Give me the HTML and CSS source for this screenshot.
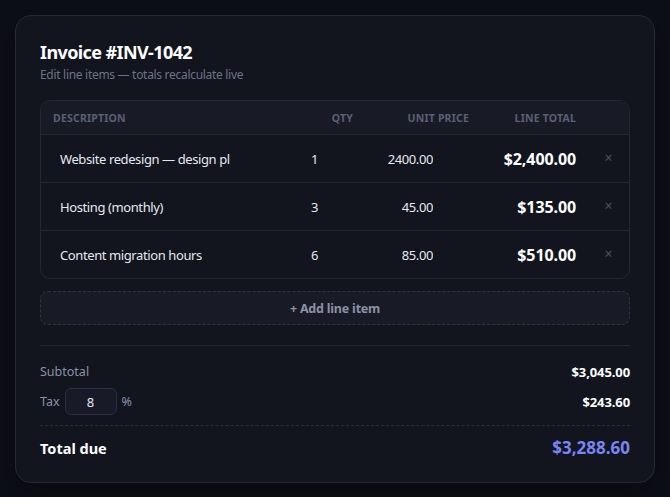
FILE: index.html
```html
<!DOCTYPE html>
<html lang="en">
<head>
<meta charset="utf-8">
<title>Invoice #INV-1042</title>
<link rel="stylesheet" href="styles.css">
</head>
<body>
<main class="card">
  <header class="head">
    <h1 class="title">Invoice #INV-1042</h1>
    <p class="subtitle">Edit line items — totals recalculate live</p>
  </header>

  <section class="table">
    <div class="row row-head">
      <div class="th th-desc">Description</div>
      <div class="th th-num">Qty</div>
      <div class="th th-num">Unit price</div>
      <div class="th th-num">Line total</div>
      <div class="th"></div>
    </div>
    <div class="row">
      <div class="td td-desc"><input class="in in-desc" value="Website redesign — design pl"></div>
      <div class="td td-qty"><input class="in in-qty" value="1"></div>
      <div class="td td-price"><input class="in in-price" value="2400.00"></div>
      <div class="td td-total">$2,400.00</div>
      <div class="td td-rm"><button class="rm">×</button></div>
    </div>
    <div class="row">
      <div class="td td-desc"><input class="in in-desc" value="Hosting (monthly)"></div>
      <div class="td td-qty"><input class="in in-qty" value="3"></div>
      <div class="td td-price"><input class="in in-price" value="45.00"></div>
      <div class="td td-total">$135.00</div>
      <div class="td td-rm"><button class="rm">×</button></div>
    </div>
    <div class="row">
      <div class="td td-desc"><input class="in in-desc" value="Content migration hours"></div>
      <div class="td td-qty"><input class="in in-qty" value="6"></div>
      <div class="td td-price"><input class="in in-price" value="85.00"></div>
      <div class="td td-total">$510.00</div>
      <div class="td td-rm"><button class="rm">×</button></div>
    </div>
  </section>

  <button class="add">+ Add line item</button>

  <section class="summary">
    <div class="sum-row">
      <span class="sum-label">Subtotal</span>
      <span class="sum-value">$3,045.00</span>
    </div>
    <div class="sum-row">
      <span class="sum-label tax">Tax <input class="tax-in" value="8"> %</span>
      <span class="sum-value">$243.60</span>
    </div>
    <div class="sum-row total-row">
      <span class="total-label">Total due</span>
      <span class="total-value">$3,288.60</span>
    </div>
  </section>
</main>
</body>
</html>
```

FILE: styles.css
```css
* { box-sizing: border-box; }

html, body {
  margin: 0;
  background: #0d0f16;
}

body {
  padding: 15px;
  font-family: "Noto Sans", "Open Sans", sans-serif;
  color: #e6e8ee;
}

.card {
  width: 640px;
  background: #12141e;
  border: 1px solid #252936;
  border-radius: 16px;
  padding: 24px 24px 23px 24px;
  box-shadow: 0 10px 30px rgba(0,0,0,0.35);
}

.title {
  margin: 0;
  font-size: 18px;
  font-weight: 700;
  letter-spacing: -0.6px;
  line-height: 24px;
  color: #ffffff;
}

.subtitle {
  margin: 2px 0 0;
  font-size: 12px;
  letter-spacing: -0.3px;
  line-height: 18px;
  color: #6b7386;
}

.table {
  margin-top: 16px;
  border: 1px solid #232735;
  border-radius: 10px;
  overflow: hidden;
}

.row {
  display: grid;
  grid-template-columns: 1fr 64px 116px 107px 41px;
  align-items: center;
  height: 48px;
  border-top: 1px solid #222633;
}

.row-head {
  height: 34px;
  border-top: none;
  background: #181b26;
  border-bottom: 1px solid #232735;
}

.row-head + .row { border-top: none; height: 47px; }

.th {
  padding: 0 12px;
  font-size: 10.5px;
  font-weight: 700;
  letter-spacing: 0.2px;
  text-transform: uppercase;
  color: #586077;
}

.th-num { text-align: right; }

.td { padding: 0 8px; }

.in {
  font-family: inherit;
  font-size: 13px;
  letter-spacing: -0.4px;
  color: #e6e8ee;
  background: transparent;
  border: none;
  outline: none;
  padding: 0;
  height: 30px;
}

.in-desc {
  margin-left: 11px;
  width: 174px;
}

.in-qty {
  margin-left: 2px;
  width: 40px;
}

.in-price {
  width: 60px;
  text-align: right;
}

.td-total {
  text-align: right;
  padding-right: 12px;
  font-size: 16px;
  font-weight: 700;
  letter-spacing: -0.1px;
  color: #ffffff;
}

.td-rm {
  display: flex;
  justify-content: center;
  align-items: center;
  padding: 0 0 2px 0;
}

.rm {
  display: flex;
  align-items: center;
  justify-content: center;
  background: none;
  border: none;
  color: #4b5266;
  font-family: inherit;
  font-size: 14px;
  line-height: 14px;
  height: 14px;
  padding: 0;
  cursor: pointer;
}

.add {
  display: block;
  width: 100%;
  height: 34px;
  margin-top: 12px;
  background: #181b26;
  border: 1px dashed #2f3445;
  border-radius: 8px;
  font-family: inherit;
  font-size: 12.5px;
  font-weight: 700;
  letter-spacing: -0.2px;
  color: #8a92a6;
  cursor: pointer;
}

.summary {
  margin-top: 20px;
  border-top: 1px solid #232735;
  padding-top: 12px;
}

.sum-row {
  display: flex;
  justify-content: space-between;
  align-items: center;
  min-height: 27px;
  margin-bottom: 3px;
}

.sum-label {
  font-size: 12.5px;
  color: #8a92a6;
}

.tax {
  display: flex;
  align-items: center;
  gap: 5px;
}

.tax-in {
  width: 52px;
  height: 27px;
  margin: 0;
  background: #181b27;
  border: 1px solid #2a2f3d;
  border-radius: 6px;
  color: #e6e8ee;
  font-family: inherit;
  font-size: 13px;
  text-align: center;
  outline: none;
}

.sum-value {
  font-size: 13px;
  font-weight: 700;
  letter-spacing: -0.1px;
  color: #ffffff;
}

.total-row {
  margin-top: 10px;
  margin-bottom: 0;
  padding-top: 10px;
  border-top: 1px dashed #2a2e3b;
}

.total-label {
  font-size: 14.5px;
  font-weight: 700;
  color: #ffffff;
}

.total-value {
  font-size: 17px;
  font-weight: 700;
  color: #7b84f4;
}
```
